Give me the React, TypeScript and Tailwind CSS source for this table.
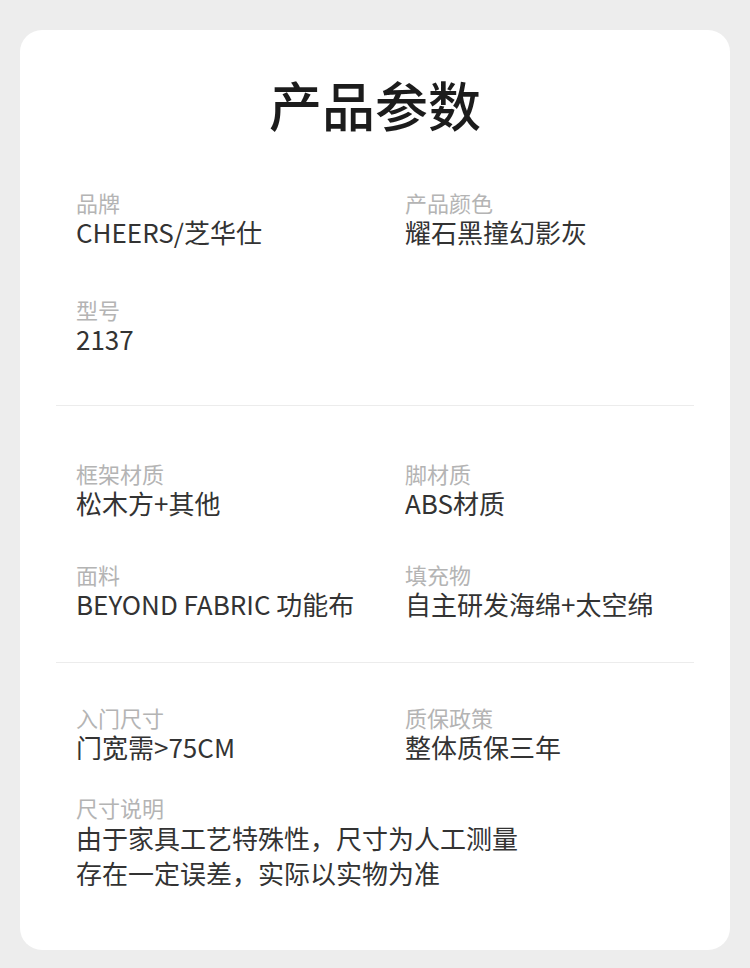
const FONT = { fontFamily: '"Noto Sans CJK SC", "Noto Sans", sans-serif' };

type Item = { label: string; value: string[] };

function Cell({ item }: { item: Item }) {
  return (
    <div>
      <div className="text-[22px] leading-[28px] text-[#b4b4b4]">{item.label}</div>
      <div className="text-[26px] leading-[32px] text-[#333333]">
        {item.value.map((line) => (
          <div key={line}>{line}</div>
        ))}
      </div>
    </div>
  );
}

function Row({ left, right, className = "" }: { left: Item; right?: Item; className?: string }) {
  return (
    <div className={`grid grid-cols-[329px_1fr] ${className}`}>
      <Cell item={left} />
      {right ? <Cell item={right} /> : <div />}
    </div>
  );
}

export default function App() {
  return (
    <div className="w-[750px] h-[968px] bg-[#ededed] pt-[30px] px-[20px]" style={FONT}>
      <div className="w-[710px] h-[920px] bg-white rounded-[22px] pt-[44px]">
        <h1 className="text-center text-[53px] leading-[60px] font-medium text-[#1c1c1c]">产品参数</h1>

        <div className="pl-[56px]">
          <Row className="mt-[54px]" left={{ label: "品牌", value: ["CHEERS/芝华仕"] }} right={{ label: "产品颜色", value: ["耀石黑撞幻影灰"] }} />
          <Row className="mt-[47px]" left={{ label: "型号", value: ["2137"] }} />
        </div>

        <div className="mx-[36px] mt-[50px] h-px bg-[#ececec]" />

        <div className="pl-[56px]">
          <Row className="mt-[53px]" left={{ label: "框架材质", value: ["松木方+其他"] }} right={{ label: "脚材质", value: ["ABS材质"] }} />
          <Row className="mt-[41px]" left={{ label: "面料", value: ["BEYOND FABRIC 功能布"] }} right={{ label: "填充物", value: ["自主研发海绵+太空绵"] }} />
        </div>

        <div className="mx-[36px] mt-[42px] h-px bg-[#ececec]" />

        <div className="pl-[56px]">
          <Row className="mt-[40px]" left={{ label: "入门尺寸", value: ["门宽需>75CM"] }} right={{ label: "质保政策", value: ["整体质保三年"] }} />
          <div className="mt-[31px]">
            <div className="text-[22px] leading-[26px] text-[#b4b4b4]">尺寸说明</div>
            <div className="text-[26px] leading-[35px] text-[#333333]">
              <div>由于家具工艺特殊性，尺寸为人工测量</div>
              <div>存在一定误差，实际以实物为准</div>
            </div>
          </div>
        </div>
      </div>
    </div>
  );
}
